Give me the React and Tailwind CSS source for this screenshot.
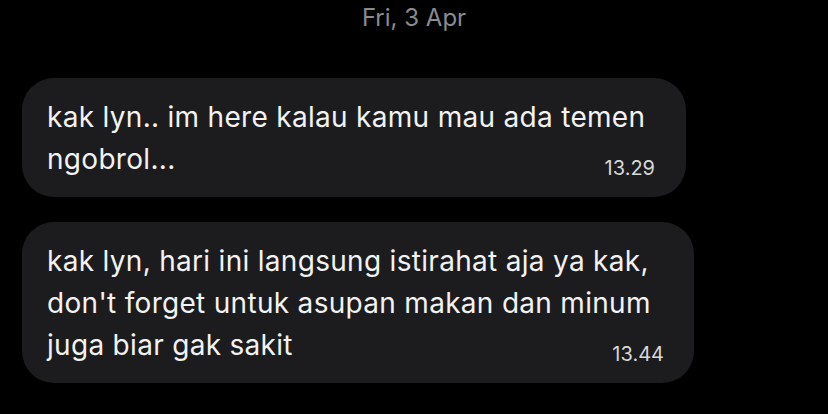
export default function App() {
  const font = { fontFamily: 'Inter, "Noto Sans", sans-serif' };
  return (
    <div className="w-[828px] h-[414px] bg-black overflow-hidden flex flex-col" style={font}>
      <div className="pt-[3px] text-center text-[24px] leading-[29px] text-[#8b8b8f]">Fri, 3 Apr</div>
      <div className="mt-[46px] pl-[22px] flex flex-col gap-[25px]">
        <div className="relative w-[664px] rounded-[32px] bg-[#1c1c1e] pl-[25px] pt-[18px] pb-[17px]">
          <div className="whitespace-nowrap text-[28px] leading-[42px] tracking-[0.3px] text-[#f2f2f2]">
            kak lyn.. im here kalau kamu mau ada temen
            <br />
            ngobrol...
          </div>
          <span className="absolute right-[31px] bottom-[17px] text-[20px] leading-[23px] text-[#d8d8d8]">13.29</span>
        </div>
        <div className="relative w-[672px] rounded-[32px] bg-[#1c1c1e] pl-[25px] pt-[18px] pb-[17px]">
          <div className="whitespace-nowrap text-[28px] leading-[42px] tracking-[0.3px] text-[#f2f2f2]">
            kak lyn, hari ini langsung istirahat aja ya kak,
            <br />
            don't forget untuk asupan makan dan minum
            <br />
            juga biar gak sakit
          </div>
          <span className="absolute right-[30px] bottom-[17px] text-[20px] leading-[23px] text-[#d8d8d8]">13.44</span>
        </div>
      </div>
    </div>
  );
}
